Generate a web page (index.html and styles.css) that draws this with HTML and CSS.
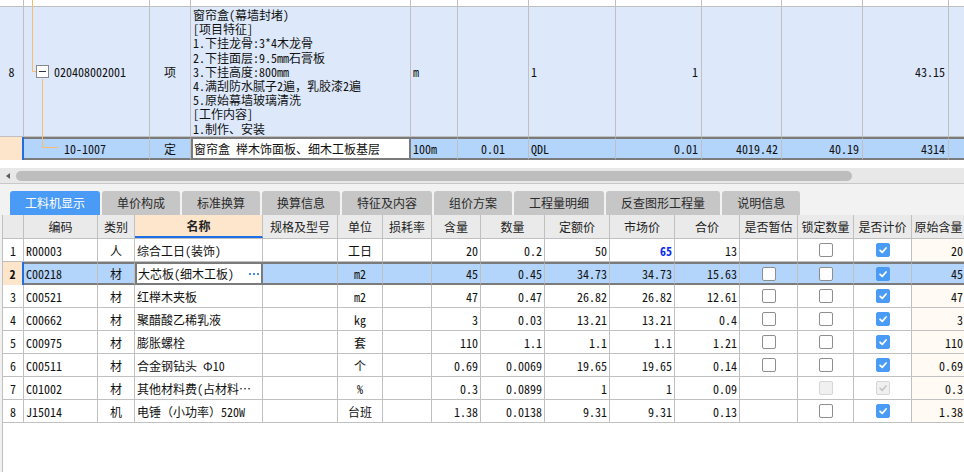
FILE: index.html
```html
<!DOCTYPE html>
<html lang="zh-CN">
<head>
<meta charset="utf-8">
<title>工料机显示</title>
<link rel="stylesheet" href="styles.css">
</head>
<body>
<div class="top">
  <div class="trow r0">
    <div></div><div></div><div></div><div></div><div></div><div></div><div></div><div></div><div></div><div></div><div></div><div></div>
  </div>
  <div class="trow r8">
    <div class="ctr">8</div>
    <div class="code8"><span class="fold"></span><span>020408002001</span></div>
    <div class="ctr">项</div>
    <div class="multi">窗帘盒(幕墙封堵)<br>[项目特征]<br>1.下挂龙骨:3*4木龙骨<br>2.下挂面层:9.5mm石膏板<br>3.下挂高度:800mm<br>4.满刮防水腻子2遍，乳胶漆2遍<br>5.原始幕墙玻璃清洗<br>[工作内容]<br>1.制作、安装</div>
    <div>m</div>
    <div></div>
    <div>1</div>
    <div class="rt">1</div>
    <div></div>
    <div></div>
    <div class="rt">43.15</div>
    <div></div>
  </div>
  <div class="trow rsel">
    <div class="rn"></div>
    <div class="codesel">10-1007</div>
    <div class="ctr">定</div>
    <div class="edit">窗帘盒 榉木饰面板、细木工板基层</div>
    <div>100m</div>
    <div class="ctr">0.01</div>
    <div>QDL</div>
    <div class="rt">0.01</div>
    <div class="rt">4019.42</div>
    <div class="rt">40.19</div>
    <div class="rt">4314</div>
    <div></div>
  </div>
  <svg class="tree" width="80" height="160" viewBox="0 0 80 160">
    <path d="M32.5 0 V71.5 H36 M42.5 79 V147.5 H58" fill="none" stroke="#f6bd70" stroke-width="1"/>
  </svg>
</div>
<div class="gap"></div>
<div class="hscroll"><span class="arrow"></span><span class="thumb"></span></div>
<div class="tabbar">
  <div class="tab active">工料机显示</div>
  <div class="tab">单价构成</div>
  <div class="tab">标准换算</div>
  <div class="tab">换算信息</div>
  <div class="tab">特征及内容</div>
  <div class="tab">组价方案</div>
  <div class="tab">工程量明细</div>
  <div class="tab">反查图形工程量</div>
  <div class="tab">说明信息</div>
</div>
<div class="lower">
  <div class="grid">
    <div class="grow head">
      <div></div><div>编码</div><div>类别</div><div class="hname">名称</div><div>规格及型号</div><div>单位</div><div>损耗率</div><div>含量</div><div>数量</div><div>定额价</div><div>市场价</div><div>合价</div><div>是否暂估</div><div>锁定数量</div><div>是否计价</div><div>原始含量</div>
    </div>
    <div class="grow">
      <div class="rn">1</div><div>R00003</div><div class="ctr">人</div><div>综合工日(装饰)</div><div></div><div class="ctr">工日</div><div></div>
      <div class="rt">20</div><div class="rt">0.2</div><div class="rt">50</div><div class="rt"><b class="blue">65</b></div><div class="rt">13</div>
      <div class="ctr"></div>
      <div class="ctr"><span class="cb"></span></div>
      <div class="ctr"><span class="cb on"><svg viewBox="0 0 14 14"><path d="M3.6 7.3 L6.1 9.7 L10.6 4.6"/></svg></span></div>
      <div class="rt orig">20</div>
    </div>
    <div class="grow sel">
      <div class="rn">2</div><div>C00218</div><div class="ctr">材</div><div class="edit">大芯板(细木工板)<span class="more"></span></div><div></div><div class="ctr">m2</div><div></div>
      <div class="rt">45</div><div class="rt">0.45</div><div class="rt">34.73</div><div class="rt">34.73</div><div class="rt">15.63</div>
      <div class="ctr"><span class="cb"></span></div>
      <div class="ctr"><span class="cb"></span></div>
      <div class="ctr"><span class="cb on"><svg viewBox="0 0 14 14"><path d="M3.6 7.3 L6.1 9.7 L10.6 4.6"/></svg></span></div>
      <div class="rt">45</div>
    </div>
    <div class="grow">
      <div class="rn">3</div><div>C00521</div><div class="ctr">材</div><div>红榉木夹板</div><div></div><div class="ctr">m2</div><div></div>
      <div class="rt">47</div><div class="rt">0.47</div><div class="rt">26.82</div><div class="rt">26.82</div><div class="rt">12.61</div>
      <div class="ctr"><span class="cb"></span></div>
      <div class="ctr"><span class="cb"></span></div>
      <div class="ctr"><span class="cb on"><svg viewBox="0 0 14 14"><path d="M3.6 7.3 L6.1 9.7 L10.6 4.6"/></svg></span></div>
      <div class="rt orig">47</div>
    </div>
    <div class="grow">
      <div class="rn">4</div><div>C00662</div><div class="ctr">材</div><div>聚醋酸乙稀乳液</div><div></div><div class="ctr">kg</div><div></div>
      <div class="rt">3</div><div class="rt">0.03</div><div class="rt">13.21</div><div class="rt">13.21</div><div class="rt">0.4</div>
      <div class="ctr"><span class="cb"></span></div>
      <div class="ctr"><span class="cb"></span></div>
      <div class="ctr"><span class="cb on"><svg viewBox="0 0 14 14"><path d="M3.6 7.3 L6.1 9.7 L10.6 4.6"/></svg></span></div>
      <div class="rt orig">3</div>
    </div>
    <div class="grow">
      <div class="rn">5</div><div>C00975</div><div class="ctr">材</div><div>膨胀螺栓</div><div></div><div class="ctr">套</div><div></div>
      <div class="rt">110</div><div class="rt">1.1</div><div class="rt">1.1</div><div class="rt">1.1</div><div class="rt">1.21</div>
      <div class="ctr"><span class="cb"></span></div>
      <div class="ctr"><span class="cb"></span></div>
      <div class="ctr"><span class="cb on"><svg viewBox="0 0 14 14"><path d="M3.6 7.3 L6.1 9.7 L10.6 4.6"/></svg></span></div>
      <div class="rt orig">110</div>
    </div>
    <div class="grow">
      <div class="rn">6</div><div>C00511</div><div class="ctr">材</div><div>合金钢钻头 Φ10</div><div></div><div class="ctr">个</div><div></div>
      <div class="rt">0.69</div><div class="rt">0.0069</div><div class="rt">19.65</div><div class="rt">19.65</div><div class="rt">0.14</div>
      <div class="ctr"><span class="cb"></span></div>
      <div class="ctr"><span class="cb"></span></div>
      <div class="ctr"><span class="cb on"><svg viewBox="0 0 14 14"><path d="M3.6 7.3 L6.1 9.7 L10.6 4.6"/></svg></span></div>
      <div class="rt orig">0.69</div>
    </div>
    <div class="grow">
      <div class="rn">7</div><div>C01002</div><div class="ctr">材</div><div>其他材料费(占材料…</div><div></div><div class="ctr">%</div><div></div>
      <div class="rt">0.3</div><div class="rt">0.0899</div><div class="rt">1</div><div class="rt">1</div><div class="rt">0.09</div>
      <div class="ctr"></div>
      <div class="ctr"><span class="cb dis"></span></div>
      <div class="ctr"><span class="cb dis"><svg viewBox="0 0 14 14"><path d="M3.6 7.3 L6.1 9.7 L10.6 4.6"/></svg></span></div>
      <div class="rt orig">0.3</div>
    </div>
    <div class="grow">
      <div class="rn">8</div><div>J15014</div><div class="ctr">机</div><div>电锤（小功率）520W</div><div></div><div class="ctr">台班</div><div></div>
      <div class="rt">1.38</div><div class="rt">0.0138</div><div class="rt">9.31</div><div class="rt">9.31</div><div class="rt">0.13</div>
      <div class="ctr"></div>
      <div class="ctr"><span class="cb"></span></div>
      <div class="ctr"><span class="cb on"><svg viewBox="0 0 14 14"><path d="M3.6 7.3 L6.1 9.7 L10.6 4.6"/></svg></span></div>
      <div class="rt orig">1.38</div>
    </div>
  </div>
</div>
</body>
</html>
```

FILE: styles.css
```css
* { box-sizing: border-box; }
html, body { margin: 0; padding: 0; }
body {
  width: 964px;
  height: 472px;
  overflow: hidden;
  background: #fff;
  font-family: "Noto Sans CJK SC", "Liberation Sans", sans-serif;
  font-size: 12px;
  color: #111;
}

/* ---------- upper grid ---------- */
.top {
  position: relative;
  height: 160px;
  overflow: hidden;
  font-family: "Noto Sans Mono CJK SC", "Noto Sans CJK SC", monospace;
}
.trow {
  display: grid;
  grid-template-columns: 24px 126px 41px 220px 47px 71px 87px 86px 80px 81px 86px 60px;
  width: 1009px;
}
.trow > div {
  border-right: 1px solid #c0c0c0;
  display: flex;
  align-items: center;
  white-space: nowrap;
  overflow: hidden;
  padding: 0 3px 0 2px;
}
.r0 { height: 7px; border-bottom: 1px solid #c0c0c0; }
.r8 { height: 130px; background: #dde9fb; border-bottom: 1px solid #c0c0c0; }
.rsel { height: 23px; background: #b4d5fb; }
.rsel > div { border-top: 2px solid #7b7b7b; border-bottom: 2px solid #7b7b7b; }
.rsel > .rn { border-top: 0; border-bottom: 0; background: #fde5cc; border-right: 2px solid #1f6fe0; }
.trow > .ctr { justify-content: center; padding: 0; }
.trow > .rt { justify-content: flex-end; }
.trow > .multi {
  display: block;
  line-height: 14.2px;
  padding: 1px 0 0 2px;
}
.trow > .code8 { padding-left: 12px; }
.fold {
  width: 13px;
  height: 13px;
  border: 1px solid #8a8a8a;
  background: #fff;
  margin-right: 5px;
  position: relative;
  flex: none;
}
.fold::after {
  content: "";
  position: absolute;
  left: 2px;
  right: 2px;
  top: 5px;
  height: 1px;
  background: #333;
}
.trow > .codesel { padding-left: 40px; }
.trow > .edit {
  background: #fff;
  border: 2px solid #7b7b7b;
  padding-left: 1px;
}
.tree { position: absolute; left: 0; top: 0; pointer-events: none; }

/* ---------- scrollbar ---------- */
.gap { height: 8px; }
.hscroll {
  height: 16px;
  background: #e8e8e8;
  border-bottom: 1px solid #c8c8c8;
  display: flex;
  align-items: center;
  padding-left: 6px;
}
.arrow {
  width: 0;
  height: 0;
  border-top: 3.5px solid transparent;
  border-bottom: 3.5px solid transparent;
  border-right: 4px solid #5c5c5c;
}
.thumb {
  margin-left: 6px;
  width: 836px;
  height: 10px;
  border-radius: 5px;
  background: #bdbdbd;
}

/* ---------- tabs ---------- */
.tabbar {
  height: 31px;
  background: #f2f2f2;
  display: flex;
  align-items: flex-end;
  gap: 2px;
  padding-left: 10px;
}
.tab {
  height: 24px;
  line-height: 24px;
  padding: 0 15px;
  background: #c6c6c6;
  color: #2a2a2a;
  border-radius: 3px 3px 0 0;
  white-space: nowrap;
}
.tab.active { background: #4a9bf6; color: #fff; }

/* ---------- lower grid ---------- */
.lower {
  height: 257px;
  background: #f0f0f0;
  padding-left: 2px;
}
.grid {
  height: 100%;
  background: #fff;
  border-left: 1px solid #c0c0c0;
  overflow: hidden;
  font-family: "Noto Sans Mono CJK SC", "Noto Sans CJK SC", monospace;
}
.grow {
  display: grid;
  grid-template-columns: 21px 74px 37px 128px 75px 45px 49px 49px 64px 65px 65px 65px 58px 56px 58px 54px;
  width: 962px;
  height: 23px;
  border-bottom: 1px solid #c0c0c0;
}
.grow > div {
  border-right: 1px solid #c0c0c0;
  display: flex;
  align-items: center;
  white-space: nowrap;
  overflow: hidden;
  padding: 0 2px;
}
.grow > .ctr { justify-content: center; padding: 0; }
.grow > .rt { justify-content: flex-end; }
.grow > .rn { justify-content: center; padding: 0; }
.grow > .orig { background: #fffaf4; }
.head {
  height: 24px;
  background: #eaeaea;
  font-family: "Noto Sans CJK SC", sans-serif;
  color: #222;
}
.head > div { justify-content: center; padding: 0; }
.head > .hname {
  background: #fde6cc;
  border-bottom: 2px solid #1d6fe3;
  font-weight: bold;
}
.grow.sel { border-bottom: 0; background: #b4d5fb; }
.grow.sel > div { border-top: 2px solid #7b7b7b; border-bottom: 2px solid #7b7b7b; }
.grow.sel > .rn {
  border-top: 0;
  border-bottom: 0;
  background: #fde5cc;
  border-right: 2px solid #1f6fe0;
  font-weight: bold;
}
.grow.sel > .edit {
  background: #fff;
  border: 2px solid #7b7b7b;
  padding-left: 1px;
}
.more {
  margin-left: auto;
  margin-right: 8px;
  width: 2px;
  height: 2px;
  background: #4b8fd6;
  box-shadow: 4px 0 #4b8fd6, 8px 0 #4b8fd6;
}
.blue { color: #0b2cef; font-weight: bold; }

/* checkboxes */
.cb {
  display: block;
  width: 14px;
  height: 14px;
  border: 1px solid #8e8e8e;
  border-radius: 2px;
  background: #fff;
}
.cb svg { display: block; width: 12px; height: 12px; }
.cb path { fill: none; stroke: #fff; stroke-width: 2; stroke-linecap: round; stroke-linejoin: round; }
.cb.on { background: #4a9bf6; border-color: #4a9bf6; }
.cb.on svg { margin: 0; }
.cb.dis { background: #f0f0f0; border-color: #d6d6d6; }
.cb.dis path { stroke: #c6c6c6; }
```
